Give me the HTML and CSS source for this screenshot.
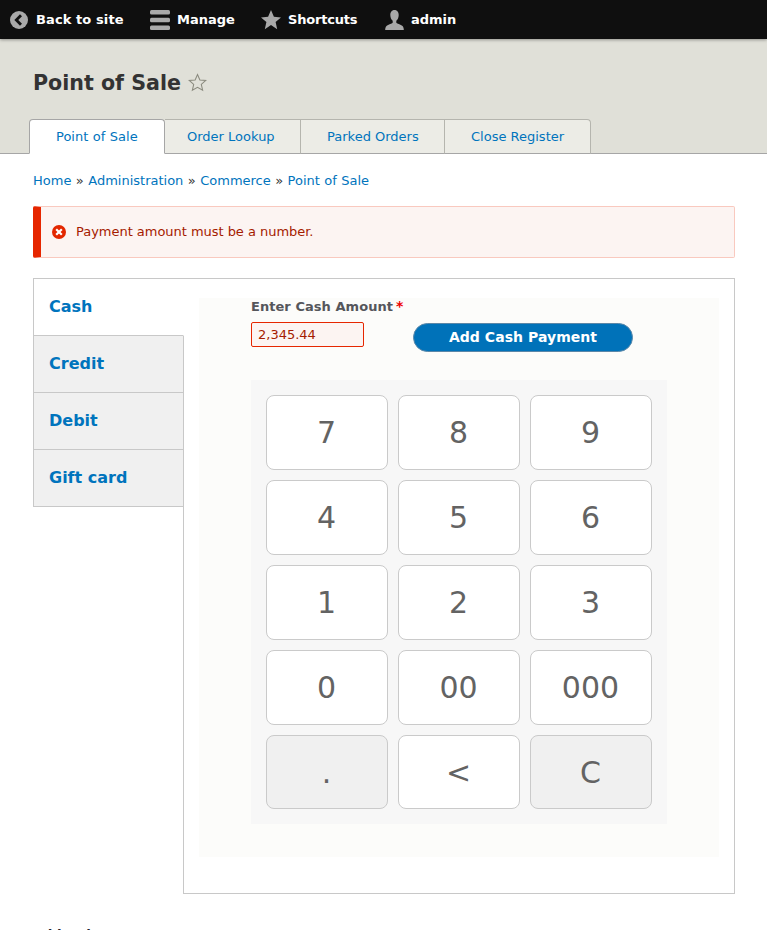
FILE: index.html
```html
<!DOCTYPE html>
<html lang="en">
<head>
<meta charset="utf-8">
<title>Point of Sale</title>
<link rel="stylesheet" href="styles.css">
</head>
<body>
<nav class="toolbar">
  <a class="tool tool-back"><svg class="ticon" width="18" height="18" viewBox="0 0 18 18"><circle cx="9" cy="9" r="9" fill="#a9a9a9"/><path d="M11 4.200 6.300 9l4.700 4.800" fill="none" stroke="#111" stroke-width="2.800"/></svg>Back to site</a>
  <a class="tool tool-manage"><svg class="ticon" width="20" height="20" viewBox="0 0 20 20"><g fill="#a9a9a9"><rect y="0" width="20" height="4.600" rx="1.500"/><rect y="7.700" width="20" height="4.600" rx="1.500"/><rect y="15.400" width="20" height="4.600" rx="1.500"/></g></svg>Manage</a>
  <a class="tool tool-short"><svg class="ticon" width="20" height="20" viewBox="0 0 20 20"><path d="M10 0l2.900 6.700 7.100.7-5.400 4.700 1.600 7.100L10 15l-6.200 4.200 1.600-7.100L0 7.400l7.100-.7z" fill="#a9a9a9"/></svg>Shortcuts</a>
  <a class="tool tool-user"><svg class="ticon" width="19" height="20" viewBox="0 0 19 20"><path d="M9.500 0c2.700 0 4.200 2.300 4.200 5 0 2.500-1 4.700-2.400 5.800v1.700c0 1 4.700 2 6.200 3.600.9 1 1.300 2.400 1.300 3.900H.2c0-1.500.4-2.900 1.300-3.900C3 14.500 7.700 13.500 7.700 12.500v-1.700C6.300 9.700 5.300 7.500 5.300 5 5.300 2.300 6.800 0 9.500 0z" fill="#a9a9a9"/></svg>admin</a>
</nav>
<header class="head">
  <h1 class="title">Point of Sale <svg class="fav" width="19" height="19" viewBox="0 0 20 20"><path d="M10 1.600l2.500 5.700 6.200.6-4.700 4.100 1.400 6.100L10 15l-5.400 3.100L6 12 1.300 7.900l6.200-.6z" fill="none" stroke="#8a8a7e" stroke-width="1.100"/></svg></h1>
  <ul class="tabs">
    <li class="tab tab-on"><a>Point of Sale</a></li>
    <li class="tab"><a>Order Lookup</a></li>
    <li class="tab"><a>Parked Orders</a></li>
    <li class="tab"><a>Close Register</a></li>
  </ul>
</header>
<main class="page">
  <div class="crumbs"><a>Home</a> » <a>Administration</a> » <a>Commerce</a> » <a>Point of Sale</a></div>
  <div class="alert"><svg class="alert-icon" width="14" height="14" viewBox="0 0 14 14"><circle cx="7" cy="7" r="7" fill="#e32700"/><path d="M4.200 4.200l5.600 5.600m0-5.600l-5.600 5.600" stroke="#fff" stroke-width="2.200"/></svg>Payment amount must be a number.</div>
  <section class="vtabs">
    <ul class="vmenu">
      <li class="vitem vitem-on">Cash</li>
      <li class="vitem">Credit</li>
      <li class="vitem">Debit</li>
      <li class="vitem">Gift card</li>
    </ul>
    <div class="vpane">
      <div class="panel">
        <div class="entry">
          <div class="field">
            <label class="label">Enter Cash Amount<span class="req">*</span></label>
            <input class="amount" type="text" value="2,345.44">
          </div>
          <button class="add" type="button">Add Cash Payment</button>
        </div>
        <div class="pad">
          <button class="key" type="button">7</button>
          <button class="key" type="button">8</button>
          <button class="key" type="button">9</button>
          <button class="key" type="button">4</button>
          <button class="key" type="button">5</button>
          <button class="key" type="button">6</button>
          <button class="key" type="button">1</button>
          <button class="key" type="button">2</button>
          <button class="key" type="button">3</button>
          <button class="key" type="button">0</button>
          <button class="key" type="button">00</button>
          <button class="key" type="button">000</button>
          <button class="key key-alt key-last" type="button">.</button>
          <button class="key key-last" type="button">&lt;</button>
          <button class="key key-alt key-last" type="button">C</button>
        </div>
      </div>
    </div>
  </section>
  <h3 class="below">Add order comment</h3>
</main>
</body>
</html>
```

FILE: styles.css
```css
* { box-sizing: border-box; }
html, body { margin: 0; padding: 0; height: 930px; overflow: hidden; }
body { background: #fff; color: #222330; font-family: "DejaVu Sans", sans-serif; font-size: 13px; }
a { color: #0074bd; text-decoration: none; }

.toolbar { height: 39px; background: #0f0f0f; display: flex; align-items: center; padding-left: 10px; box-shadow: 0 1px 3px rgba(0,0,0,.35); position: relative; }
.tool { display: flex; align-items: center; color: #fff; font-weight: 700; font-size: 13px; }
.tool-back { width: 140px; letter-spacing: .1px; }
.tool-manage { width: 111px; }
.tool-short { width: 124px; letter-spacing: -.2px; }
.ticon { flex: none; }
.tool-back .ticon { margin-right: 8px; }
.tool-manage .ticon { margin-right: 7px; }
.tool-short .ticon { margin-right: 7px; }
.tool-user .ticon { margin-right: 7px; }

.head { height: 115px; background: #e0e0d8; border-bottom: 1px solid #a6a6a6; display: flex; flex-direction: column; padding: 30px 0 0 29px; }
.title { margin: 0 0 0 4px; font-size: 20.6px; line-height: 29px; font-weight: 700; color: #333; display: flex; align-items: center; gap: 7px; }
.fav { margin-top: -2px; }
.tabs { list-style: none; margin: 21px 0 -1px 0; padding: 0; display: flex; height: 35px; }
.tab { height: 35px; border: 1px solid #b5b5ae; border-left: 0; border-bottom-color: #a6a6a6; background: #ecece6; font-size: 13px; line-height: 33px; padding: 0 26px 0 26px; }
.tab:nth-child(2) { width: 136px; padding: 0 0 0 22px; }
.tab:nth-child(3) { width: 144px; padding: 0 0 0 26px; }
.tab:nth-child(4) { width: 146px; padding: 0 0 0 26px; border-top-right-radius: 4px; }
.tab-on { width: 136px; background: #fff; border-left: 1px solid #a6a6a6; border-color: #a6a6a6; border-bottom-color: #fff; border-radius: 4px 4px 0 0; word-spacing: .4px; }

.page { padding: 0 32px 0 33px; }
.crumbs { margin-top: 19px; font-size: 13px; line-height: 16px; color: #333; word-spacing: .3px; }
.alert { margin-top: 17px; height: 52px; background: #fcf4f2; border: 1px solid #f9c9bf; border-left: 8px solid #e62600; border-radius: 2px; color: #a51b00; font-size: 13px; letter-spacing: -.03px; display: flex; align-items: center; padding: 0 0 1px 11px; }
.alert-icon { margin-right: 10px; flex: none; }

.vtabs { margin-top: 20px; display: flex; align-items: flex-start; }
.vmenu { list-style: none; margin: 0 -1px 0 0; padding: 0; width: 151px; flex: none; border-top: 1px solid #c8c8c8; border-left: 1px solid #c8c8c8; position: relative; z-index: 1; }
.vitem { height: 57px; border-bottom: 1px solid #c8c8c8; border-right: 1px solid #c8c8c8; background: #f0f0f0; color: #0074bd; font-weight: 700; font-size: 16px; line-height: 55px; padding-left: 15px; }
.vitem-on { background: #fff; border-right-color: #fff; }
.vpane { flex: 1; height: 616px; border: 1px solid #c8c8c8; padding: 19px 15px 0 15px; }
.panel { background: #fcfcfa; height: 559px; padding: 0 52px; }
.entry { display: flex; height: 82px; }
.field { width: 162px; flex: none; }
.label { display: block; font-size: 13px; font-weight: 700; color: #55565b; line-height: 17px; letter-spacing: .05px; }
.req { color: #ee0000; margin-left: 3px; font-size: 14px; }
.amount { display: block; margin-top: 7px; width: 113px; height: 25px; border: 1px solid #e62600; border-radius: 2px; background: #fcf4f2; color: #a51b00; font: 13px "DejaVu Sans", sans-serif; padding: 0 6px; outline: 0; }
.add { margin-top: 25px; width: 220px; height: 29px; border: 1px solid #5a87a8; border-radius: 20px; background: #0072b9; color: #fff; font: 700 14px "DejaVu Sans", sans-serif; letter-spacing: .05px; padding: 0 0 2px; }

.pad { width: 416px; height: 444px; background: #f7f7f7; padding: 15px; display: grid; grid-template-columns: repeat(3, 122px); grid-auto-rows: 75px; gap: 10px; }
.key { border: 1px solid #cacaca; border-radius: 8px; background: #fff; color: #636363; font: 30px "DejaVu Sans", sans-serif; padding: 0 1px 0 0; }
.key-alt { background: #f0f0f0; }
.key-last { height: 74px; }

.below { margin: 33px 0 0; font-size: 13px; line-height: 16px; font-weight: 700; color: #222330; }
```
